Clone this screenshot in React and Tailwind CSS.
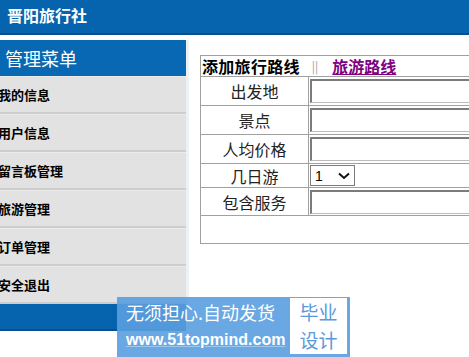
import React from "react";

const menu = ["我的信息", "用户信息", "留言板管理", "旅游管理", "订单管理", "安全退出"];

const rows = [
  { label: "出发地", h: "h-[29px]", type: "text" },
  { label: "景点", h: "h-[29px]", type: "text" },
  { label: "人均价格", h: "h-[29px]", type: "text" },
  { label: "几日游", h: "h-[24px]", type: "select" },
  { label: "包含服务", h: "h-[28px]", type: "text" },
];

const cjk = { fontFamily: '"Noto Sans CJK SC", "Liberation Sans", sans-serif' };

const App = () => {
  return (
    <div className="relative w-[469px] h-[357px] overflow-hidden bg-white" style={cjk}>
      <div className="h-[35px] bg-[#0664ae] border-b-2 border-[#0a4f8c] flex items-center pl-[7px]">
        <h1 className="text-white font-bold text-[16px] leading-none -mt-[3px]">晋阳旅行社</h1>
      </div>

      <div className="flex mt-[5px]">
        <div className="w-[189px] shrink-0">
          <div className="flex">
            <div className="w-[186px]">
              <div className="h-[36px] bg-[#0868b3] flex items-center pl-[5px]">
                <span className="text-white text-[18px] leading-none">管理菜单</span>
              </div>
              {menu.map((m) => (
                <div
                  key={m}
                  className="h-[38px] bg-[#e2e2e2] border-b-2 border-[#cdcdcd] border-t border-t-[#ececec] flex items-center pl-0"
                >
                  <span className="text-black font-bold text-[13px] leading-none -ml-[2px]">{m}</span>
                </div>
              ))}
              <div className="h-[27px] bg-[#0664ae] border-b-2 border-[#0a4f8c]" />
            </div>
            <div className="w-[3px] bg-[#eef1f3] h-[265px]" />
          </div>
        </div>

        <div className="pl-[11px] pt-[15px]">
          <div className="w-[330px] border border-[#a0a0a0]">
            <div className="h-[21px] flex items-center border-b border-[#a0a0a0] whitespace-nowrap">
              <span className="font-bold text-[16px] text-black leading-none pl-[1px] tracking-[0.3px]">添加旅行路线</span>
              <span className="text-[#9a9a9a] text-[12px] ml-[12px] leading-none">||</span>
              <a href="#" className="font-bold text-[16px] text-[#800080] underline ml-[14px] leading-none">旅游路线</a>
            </div>
            {rows.map((r) => (
              <div key={r.label} className={`flex ${r.h} border-b border-[#a0a0a0]`}>
                <div className="w-[108px] shrink-0 border-r border-[#a0a0a0] flex items-center justify-center text-[16px] text-[#222] leading-none">
                  {r.label}
                </div>
                <div className="flex-1 flex items-center pl-[1px]">
                  {r.type === "text" ? (
                    <div className="w-full h-[24px] border-t-2 border-l-2 border-b border-[#7b7b7b] border-b-[#bdbdbd] bg-white" />
                  ) : (
                    <div className="w-[45px] h-[21px] border border-[#7b7b7b] flex items-center justify-between px-[4px] text-[14px] text-black bg-white">
                      <span className="leading-none" style={{ fontFamily: '"Liberation Sans", sans-serif' }}>1</span>
                      <svg width="12" height="8" viewBox="0 0 12 8">
                        <path d="M1 1.5 L6 6 L11 1.5" fill="none" stroke="#111" strokeWidth="2" />
                      </svg>
                    </div>
                  )}
                </div>
              </div>
            ))}
            <div className="h-[27px]" />
          </div>
        </div>
      </div>

      <div className="absolute left-[117px] top-[297px] w-[233px] h-[60px] bg-[#5a9fe0]/90 flex">
        <div className="flex-1 flex flex-col pl-[9px] pt-[3px]">
          <span className="text-white text-[18px] leading-[24px] whitespace-nowrap">无须担心.自动发货</span>
          <span
            className="text-white text-[16px] font-bold leading-[22px] whitespace-nowrap mt-[5px] underline decoration-[#9cc8f0]"
            style={{ fontFamily: '"Liberation Sans", sans-serif' }}
          >
            www.51topmind.com
          </span>
        </div>
        <div className="w-[57px] h-[56px] mt-[1px] mr-[3px] bg-white flex flex-col items-center justify-center text-[#5a9ad8] text-[19px] leading-[28px]">
          <span>毕业</span>
          <span>设计</span>
        </div>
      </div>
    </div>
  );
};

export default App;
